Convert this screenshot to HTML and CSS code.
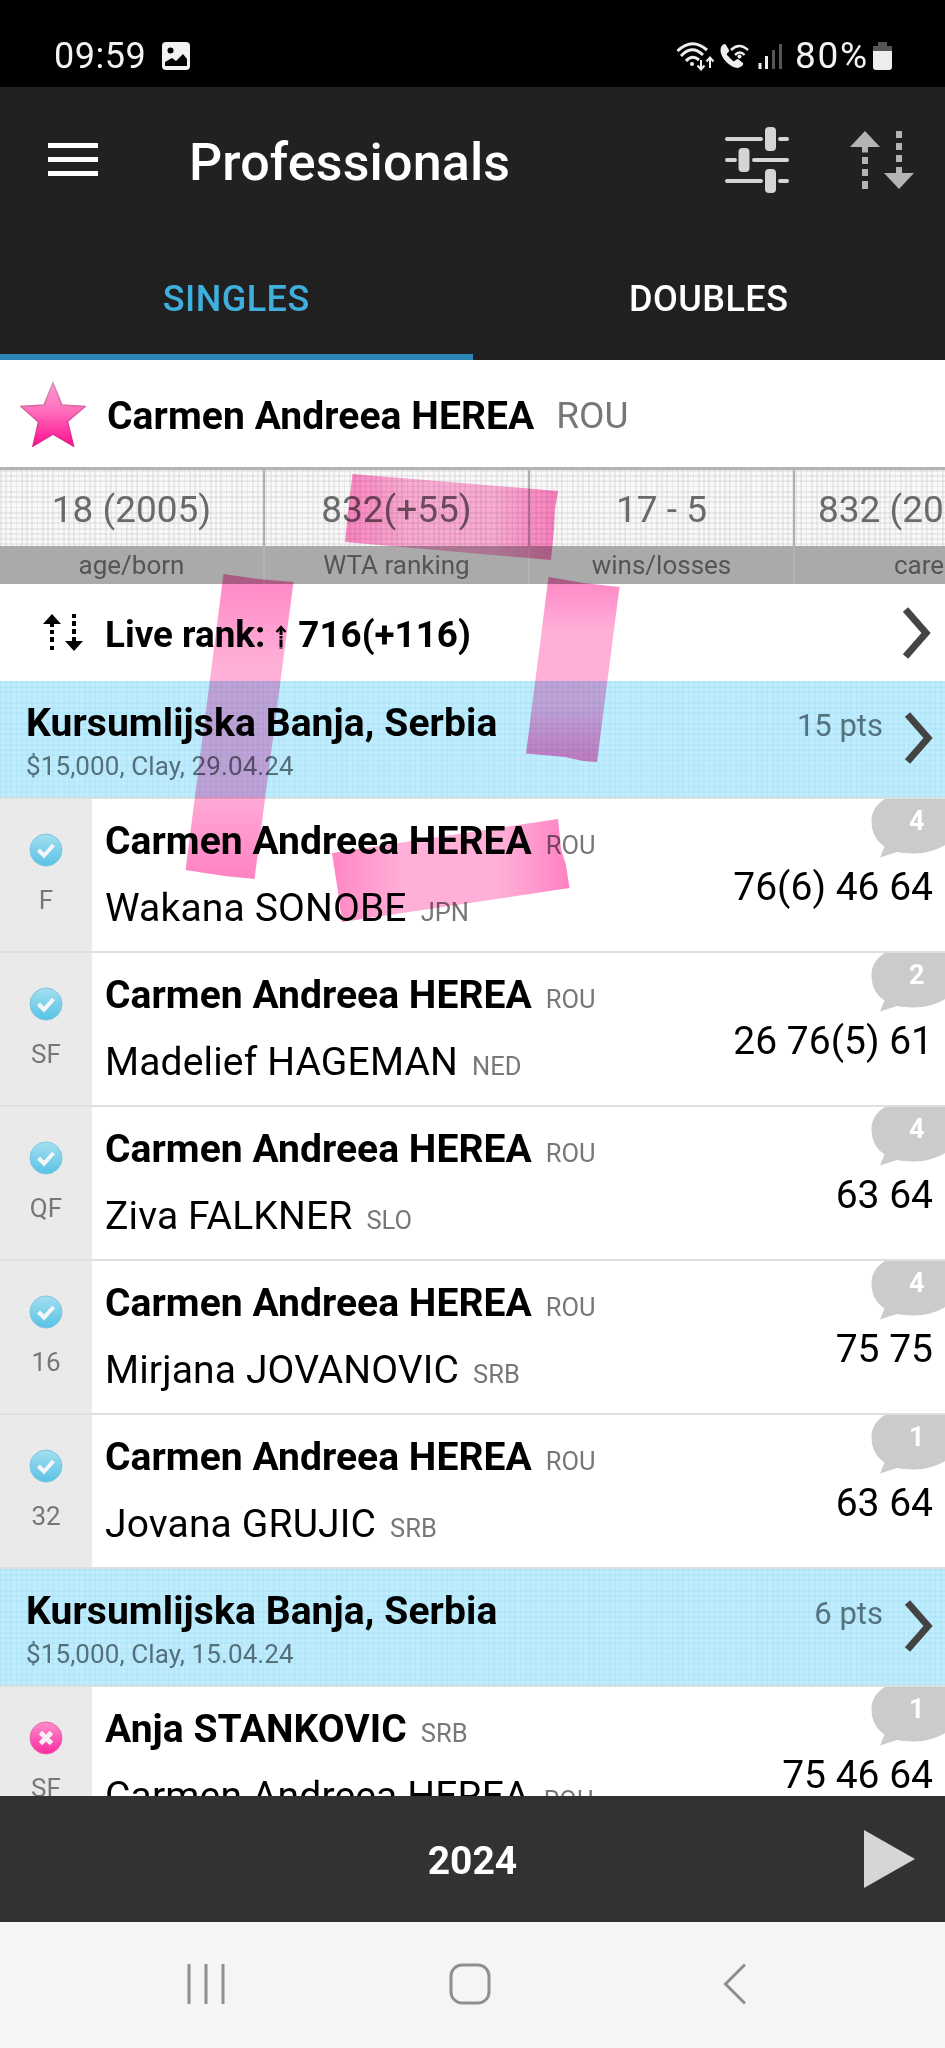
FILE: index.html
```
<!DOCTYPE html>
<html lang="en">
<head>
<meta charset="utf-8">
<title>Professionals</title>
<link rel="stylesheet" href="styles.css">
</head>
<body>
<svg class="defs" width="0" height="0" aria-hidden="true">
  <defs>
    <linearGradient id="winFill" x1="0" y1="0" x2="0" y2="1"><stop offset="0" stop-color="#a4dff0"/><stop offset="1" stop-color="#58c2e6"/></linearGradient>
    <linearGradient id="lossFill" x1="0" y1="0" x2="0" y2="1"><stop offset="0" stop-color="#ff8fcb"/><stop offset="1" stop-color="#fb2aa0"/></linearGradient>
    <symbol id="win" viewBox="0 0 34 34"><circle cx="17" cy="17" r="16" fill="url(#winFill)" stroke="#7cc5de" stroke-width="1"/><path d="M9.500 17l5.500 5.500L24.500 12" fill="none" stroke="#f4f6f7" stroke-width="4"/></symbol>
    <symbol id="loss" viewBox="0 0 34 34"><circle cx="17" cy="17" r="16" fill="url(#lossFill)" stroke="#e862ae" stroke-width="1"/><path d="M11.500 11.500l11 11M22.500 11.500l-11 11" fill="none" stroke="#f4f0f3" stroke-width="4.800"/></symbol>
    <symbol id="bubble" viewBox="0 0 74 60"><path d="M14 0C4 6 .5 14 .5 22c0 12 5 20 13 25.500L9 58.500l17-5.500c20 3.500 36 .5 48-7V0z" fill="#cbcbcb"/></symbol>
    <symbol id="chevron" viewBox="0 0 30 54"><path d="M3.500 3.500L24 27 3.500 50.500" fill="none" stroke="#444" stroke-width="7"/></symbol>
  </defs>
</svg>

<div class="statusbar">
  <span class="clock">09:59</span>
  <svg class="photo" width="28" height="28" viewBox="0 0 28 28"><path d="M4 0h20a4 4 0 0 1 4 4v20a4 4 0 0 1-4 4H4a4 4 0 0 1-4-4V4a4 4 0 0 1 4-4z" fill="#f2f2f2"/><circle cx="8.500" cy="8.500" r="3" fill="#000"/><path d="M3 24v-4l7-4 4 3 7-7 4 5v7z" fill="#000"/></svg>
  <svg class="signals" width="110" height="30" viewBox="0 0 110 30" fill="none" stroke="#eee">
    <path d="M1.500 10Q16-4 31 9M5 15Q16 3 27 14M10 20Q16 13 23 19" stroke-width="3"/><circle cx="16" cy="23" r="2" fill="#eee" stroke="none"/>
    <path d="M25 19v9M21.500 24.500l3.500 4 3.500-4M34 27v-10M30.500 20.500l3.500-4 3.500 4" stroke-width="2"/>
    <path d="M45 6c2-3 4-4 5-2l3 5c1 2-3 3-2 5l6 6c2 1 3-2 5-2l5 4c1 2-2 4-5 5C55 27 42 16 45 6z" fill="#eee" stroke="none"/>
    <path d="M55 9q8-8 17 0M59 14q5-5 9.500 0" stroke-width="2.500"/><circle cx="63.500" cy="15.500" r="2" fill="#eee" stroke="none"/>
    <path d="M84 28v-6M90.500 28V15" stroke-width="3"/><path d="M97.500 28V9M104.500 28V3" stroke="#555" stroke-width="3"/>
  </svg>
  <span class="charge">80%</span>
  <svg class="battery" width="19" height="28" viewBox="0 0 19 28"><path d="M5 0h9v4h5v5H0V4h5z" fill="#555"/><path d="M0 9h19v16a3 3 0 0 1-3 3H3a3 3 0 0 1-3-3z" fill="#eee"/></svg>
</div>

<header class="toolbar">
  <div class="menu"><i></i><i></i><i></i></div>
  <h1>Professionals</h1>
  <svg class="filters" width="66" height="68" viewBox="0 0 66 68"><g stroke="#d5d5d5" stroke-width="4" stroke-linecap="round"><path d="M3 13h34M56 13h7M3 34h8M30 34h33M3 55h34M56 55h7"/></g><g fill="#d5d5d5"><rect x="41" y="1" width="11" height="24" rx="4"/><rect x="14.500" y="22" width="11" height="24" rx="4"/><rect x="41" y="43" width="11" height="24" rx="4"/></g></svg>
  <svg class="sort" width="64" height="60" viewBox="0 0 64 60" fill="#b4b4b4"><path d="M0 17L15 1l15 16H18v5.500h-6V17zM12 27h6v7h-6zM12 39h6v7h-6zM12 51h6v8h-6zM46 1h6v7h-6zM46 13h6v7h-6zM46 25h6v7h-6zM34 43h12v-6h6v6h12L49 59z"/></svg>
</header>

<nav class="tabs"><div class="tab active">SINGLES</div><div class="tab">DOUBLES</div></nav>

<section class="player">
  <svg width="66" height="66" viewBox="0 0 66 66"><defs><linearGradient id="starFill" x1="0" y1="0" x2="0" y2="1"><stop offset="0" stop-color="#ff9cd2"/><stop offset=".45" stop-color="#ff6dbb"/><stop offset="1" stop-color="#ff0f93"/></linearGradient><linearGradient id="starEdge" x1="0" y1="0" x2="0" y2="1"><stop offset="0" stop-color="#d094b4"/><stop offset="1" stop-color="#e31b8b"/></linearGradient></defs><path d="M33 2l9 22 23 1.500-17.500 15L53.500 65 33 53 13 65 18.500 41 1 25.500l23-1.500z" fill="url(#starFill)" stroke="url(#starEdge)" stroke-width="1.500"/></svg>
  <span class="player-name">Carmen Andreea HEREA</span><span class="player-country">ROU</span>
</section>

<section class="stats">
  <div class="stat"><div class="value">18 (2005)</div><div class="label">age/born</div></div>
  <div class="stat"><div class="value">832(+55)</div><div class="label">WTA ranking</div></div>
  <div class="stat"><div class="value">17 - 5</div><div class="label">wins/losses</div></div>
  <div class="stat cut"><div class="value">832 (20</div><div class="label">care</div></div>
</section>

<section class="live">
  <svg class="live-icon" width="42" height="38" viewBox="0 0 42 38"><path d="M1 10L10 0l9 10h-7v3H8v-3zM8 16h4v4H8zM8 23h4v5H8zM8 32h4v4H8zM30 0h4v4h-4zM30 7h4v5h-4zM30 15h4v5h-4zM30 23h4v4h7l-9 10-9-10h7z"/></svg>
  <span>Live rank:</span>
  <svg class="rise" width="12" height="24" viewBox="0 0 12 24"><path d="M1.500 7L6 2l4.500 5" fill="none" stroke="#000" stroke-width="2.400"/><path d="M6 2v22" stroke="#000" stroke-width="3" stroke-dasharray="8 1 2.500 1"/></svg>
  <span>716(+116)</span>
  <svg class="chevron" width="30" height="54"><use href="#chevron"/></svg>
</section>

<main class="list">
  <div class="event"><div><div class="place">Kursumlijska Banja, Serbia</div><div class="info">$15,000, Clay, 29.04.24</div></div><div class="points">15 pts</div><svg class="chevron" width="30" height="54"><use href="#chevron"/></svg></div>

  <div class="match"><div class="round"><svg width="34" height="34"><use href="#win"/></svg>F</div><div class="names"><div class="name first">Carmen Andreea HEREA<small>ROU</small></div><div class="name">Wakana SONOBE<small>JPN</small></div></div><div class="result"><div class="comments"><svg width="74" height="60"><use href="#bubble"/></svg><b>4</b></div><div class="score">76(6) 46 64</div></div></div>
  <div class="match"><div class="round"><svg width="34" height="34"><use href="#win"/></svg>SF</div><div class="names"><div class="name first">Carmen Andreea HEREA<small>ROU</small></div><div class="name">Madelief HAGEMAN<small>NED</small></div></div><div class="result"><div class="comments"><svg width="74" height="60"><use href="#bubble"/></svg><b>2</b></div><div class="score">26 76(5) 61</div></div></div>
  <div class="match"><div class="round"><svg width="34" height="34"><use href="#win"/></svg>QF</div><div class="names"><div class="name first">Carmen Andreea HEREA<small>ROU</small></div><div class="name">Ziva FALKNER<small>SLO</small></div></div><div class="result"><div class="comments"><svg width="74" height="60"><use href="#bubble"/></svg><b>4</b></div><div class="score">63 64</div></div></div>
  <div class="match"><div class="round"><svg width="34" height="34"><use href="#win"/></svg>16</div><div class="names"><div class="name first">Carmen Andreea HEREA<small>ROU</small></div><div class="name">Mirjana JOVANOVIC<small>SRB</small></div></div><div class="result"><div class="comments"><svg width="74" height="60"><use href="#bubble"/></svg><b>4</b></div><div class="score">75 75</div></div></div>
  <div class="match"><div class="round"><svg width="34" height="34"><use href="#win"/></svg>32</div><div class="names"><div class="name first">Carmen Andreea HEREA<small>ROU</small></div><div class="name">Jovana GRUJIC<small>SRB</small></div></div><div class="result"><div class="comments"><svg width="74" height="60"><use href="#bubble"/></svg><b>1</b></div><div class="score">63 64</div></div></div>

  <div class="event"><div><div class="place">Kursumlijska Banja, Serbia</div><div class="info">$15,000, Clay, 15.04.24</div></div><div class="points">6 pts</div><svg class="chevron" width="30" height="54"><use href="#chevron"/></svg></div>

  <div class="match"><div class="round"><svg width="34" height="34"><use href="#loss"/></svg>SF</div><div class="names"><div class="name first">Anja STANKOVIC<small>SRB</small></div><div class="name">Carmen Andreea HEREA<small>ROU</small></div></div><div class="result"><div class="comments"><svg width="74" height="60"><use href="#bubble"/></svg><b>1</b></div><div class="score">75 46 64</div></div></div>
</main>

<footer class="yearbar"><span>2024</span><svg width="52" height="60" viewBox="0 0 52 60"><path d="M0 1l51 29L0 59z" fill="#d6d6d6"/></svg></footer>

<div class="sysnav">
  <svg width="38" height="42" viewBox="0 0 38 42"><path d="M2 1v40M19 1v40M36 1v40" stroke="#8f8f91" stroke-width="3"/></svg>
  <svg class="home" width="42" height="42" viewBox="0 0 42 42"><rect x="2" y="2" width="38" height="38" rx="11" fill="none" stroke="#8f8f91" stroke-width="3"/></svg>
  <svg class="back" width="24" height="42" viewBox="0 0 24 42"><path d="M22 1.500L2.500 21 22 40.500" fill="none" stroke="#8f8f91" stroke-width="3"/></svg>
</div>

<!-- Translucent tape strips laid over the page -->
<svg class="tapes" width="945" height="2048" viewBox="0 0 945 2048">
  <defs>
    <linearGradient id="tape"><stop offset="0" stop-color="#ff87c4"/><stop offset=".3" stop-color="#ffafd8"/><stop offset=".7" stop-color="#ffafd8"/><stop offset="1" stop-color="#ff82c2"/></linearGradient>
    <linearGradient id="tapeDown" x1="0" y1="0" x2="0" y2="1"><stop offset="0" stop-color="#ff87c4"/><stop offset=".3" stop-color="#ffafd8"/><stop offset=".7" stop-color="#ffafd8"/><stop offset="1" stop-color="#ff82c2"/></linearGradient>
  </defs>
  <path d="M352.500 474L558 491l-3 18-1 20-3 31-206-18 3-30z" fill="url(#tape)"/>
  <path d="M223.500 574l34 5 36 3-39 297-30-3-39-6z" fill="url(#tapeDown)"/>
  <path d="M548.500 577l35 6 36 4-22.500 175-14-1-18-4-39-3.500z" fill="url(#tapeDown)"/>
  <path d="M332 853l226-34 3 30 5 16 3.500 23L342 922l-4-30z" fill="url(#tape)"/>
</svg>
</body>
</html>
```
FILE: styles.css
```
* { box-sizing: border-box; }
body { margin: 0; width: 945px; height: 2048px; overflow: hidden; display: flex; flex-direction: column; position: relative; background: #fff; color: #000; font-family: Roboto, "Liberation Sans", sans-serif; }
svg { display: block; flex: none; }
.defs { position: absolute; }
span, .name, .score, .place, .info, .points, h1, .value, .label { white-space: nowrap; }

.statusbar { flex: none; height: 87px; padding: 25px 53px 0 54px; display: flex; align-items: center; background: #000; color: #f2f2f2; }
.clock { font-size: 36px; letter-spacing: .5px; }
.photo { margin-left: 16px; }
.signals { margin-left: auto; }
.charge { margin-left: 9px; font-size: 37px; line-height: 42px; letter-spacing: 1.8px; }
.battery { margin-left: 4px; }

.toolbar { flex: none; height: 145px; padding: 0 31px 0 48px; display: flex; align-items: center; background: #212121; }
.menu { width: 50px; display: flex; flex-direction: column; gap: 9px; }
.menu i { height: 5px; background: #fff; }
.toolbar h1 { margin: 6px 0 0 91px; color: #fff; font-size: 52px; font-weight: 500; line-height: 60px; letter-spacing: .15px; }
.filters { margin-left: auto; }
.sort { margin-left: 60px; }

.tabs { flex: none; height: 128px; display: flex; background: #202020; }
.tab { flex: 1; display: flex; align-items: center; justify-content: center; padding-top: 11px; border-bottom: 6px solid transparent; font-size: 36px; font-weight: 500; letter-spacing: .45px; color: #fff; }
.active { color: #3fb0de; border-color: #2b86b6; }

.player { flex: none; height: 110px; padding-left: 20px; display: flex; align-items: center; border-bottom: 3px solid #b4b4b4; }
.player-name { margin: 4px 0 0 21px; font-size: 39px; font-weight: 700; letter-spacing: .08px; }
.player-country { margin: 4px 0 0 22px; font-size: 37px; color: #777; }

.stats { flex: none; height: 114px; display: flex; overflow: hidden; }
.stat { flex: none; width: 265px; color: #6a6a6a; text-align: center; }
.value { height: 76px; line-height: 80px; font-size: 37px; border-right: 2px solid #b0b0b0; background: repeating-linear-gradient(90deg, rgba(190,190,190,.25) 0 1.750px, transparent 1.750px 5.250px), repeating-linear-gradient(rgba(190,190,190,.25) 0 1.750px, transparent 1.750px 5.250px), #f9f9f9; }
.label { height: 38px; line-height: 39px; font-size: 26px; color: #555; background: #aaa; border-right: 2px solid #b4b4b4; }
.stat.cut { width: 150px; text-align: left; }
.cut .value { padding-left: 23px; border: 0; }
.cut .label { padding-left: 99px; border: 0; }

.live { flex: none; height: 97px; padding: 0 13px 0 42px; display: flex; align-items: center; font-size: 36.800px; font-weight: 700; }
.live span { margin-top: 3px; }
.live-icon { margin-right: 21px; }
.rise { margin: 8px 11px 0 10px; }
.live .chevron { margin-left: auto; }
.chevron { flex: none; }

.list { flex: none; height: 1115px; overflow: hidden; }
.event { height: 118px; padding: 0 11px 0 26px; display: flex; border-bottom: 2px solid #d9dfe2; background: repeating-linear-gradient(90deg, rgba(130,205,235,.15) 0 1.750px, transparent 1.750px 5.250px), repeating-linear-gradient(rgba(130,205,235,.15) 0 1.750px, transparent 1.750px 5.250px), #bfedfd; }
.place { margin-top: 18px; height: 48px; line-height: 48px; font-size: 39px; font-weight: 700; letter-spacing: .1px; }
.info { height: 38px; line-height: 39px; font-size: 26px; letter-spacing: .1px; color: #55707b; }
.points { margin: 25px 21px 0 auto; height: 40px; line-height: 40px; font-size: 31px; color: #55737f; }
.event .chevron { margin-top: 30px; }

.match { height: 154px; display: flex; border-bottom: 2px solid #dfdfdf; }
.round { flex: none; width: 92px; padding-top: 34px; display: flex; flex-direction: column; align-items: center; gap: 17px; line-height: 32px; font-size: 26px; color: #777; background: #eaeaea; }
.names { padding: 9px 0 0 13px; }
.name { height: 67px; line-height: 67px; font-size: 39px; letter-spacing: .15px; }
.first { letter-spacing: .05px; }
.first { font-weight: 700; }
.name small { margin-left: 14px; font-size: 25.500px; font-weight: 400; letter-spacing: 0; color: #777; }
.result { flex: none; margin-left: auto; display: flex; flex-direction: column; align-items: flex-end; }
.comments { height: 60px; position: relative; }
.comments b { position: absolute; top: 6px; left: 38px; font-size: 27px; line-height: 32px; color: #fff; }
.score { margin-right: 12px; margin-top: 4px; height: 48px; line-height: 48px; font-size: 39px; }

.yearbar { flex: none; height: 126px; padding: 0 29px 0 81px; display: flex; align-items: center; background: #323232; color: #fff; font-size: 39px; font-weight: 700; }
.yearbar span { flex: 1; padding-top: 3px; text-align: center; }

.sysnav { flex: none; height: 126px; padding: 0 0 3px 187px; display: flex; align-items: center; background: #f5f5f7; }
.home { margin-left: 224px; }
.back { margin-left: 232px; }

.tapes { position: absolute; top: 0; left: 0; mix-blend-mode: multiply; pointer-events: none; }
```
